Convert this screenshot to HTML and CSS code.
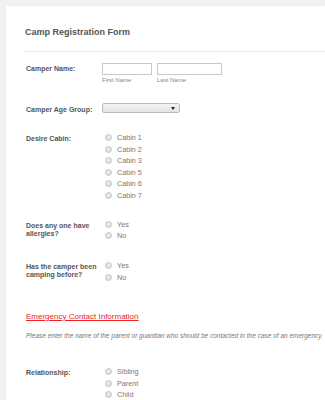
FILE: index.html
```html
<!DOCTYPE html>
<html>
<head>
<meta charset="utf-8">
<link rel="stylesheet" href="styles.css">
</head>
<body>
<div class="card">
  <h1 class="title">Camp Registration Form</h1>
  <div class="divider"></div>

  <div class="row row-name">
    <div class="label">Camper Name:</div>
    <div class="field">
      <div class="name-group">
        <div class="name-part">
          <span class="input first"></span>
          <span class="sub">First Name</span>
        </div>
        <div class="name-part">
          <span class="input last"></span>
          <span class="sub">Last Name</span>
        </div>
      </div>
    </div>
  </div>

  <div class="row row-age">
    <div class="label">Camper Age Group:</div>
    <div class="field">
      <span class="select"><span class="arrow"></span></span>
    </div>
  </div>

  <div class="row row-cabin">
    <div class="label">Desire Cabin:</div>
    <div class="field options">
      <div class="opt"><span class="radio"></span>Cabin 1</div>
      <div class="opt"><span class="radio"></span>Cabin 2</div>
      <div class="opt"><span class="radio"></span>Cabin 3</div>
      <div class="opt"><span class="radio"></span>Cabin 5</div>
      <div class="opt"><span class="radio"></span>Cabin 6</div>
      <div class="opt"><span class="radio"></span>Cabin 7</div>
    </div>
  </div>

  <div class="row row-allergy">
    <div class="label">Does any one have allergies?</div>
    <div class="field options">
      <div class="opt"><span class="radio"></span>Yes</div>
      <div class="opt"><span class="radio"></span>No</div>
    </div>
  </div>

  <div class="row row-camping">
    <div class="label">Has the camper been camping before?</div>
    <div class="field options">
      <div class="opt"><span class="radio"></span>Yes</div>
      <div class="opt"><span class="radio"></span>No</div>
    </div>
  </div>

  <h2 class="section">Emergency Contact Information</h2>
  <p class="note">Please enter the name of the parent or guardian who should be contacted in the case of an emergency.</p>

  <div class="row row-rel">
    <div class="label">Relationship:</div>
    <div class="field options">
      <div class="opt"><span class="radio"></span>Sibling</div>
      <div class="opt"><span class="radio"></span>Parent</div>
      <div class="opt"><span class="radio"></span>Child</div>
    </div>
  </div>
</div>
</body>
</html>
```

FILE: styles.css
```css
html, body {
  margin: 0;
  padding: 0;
}
body {
  background: #f2f2f2;
  font-family: "Liberation Sans", Arial, sans-serif;
  overflow: hidden;
  height: 400px;
}
.card {
  margin: 6px 0 0 6px;
  background: #fff;
  padding: 20px 0 40px 20px;
  box-shadow: 0 0 2px rgba(0,0,0,0.06);
  min-height: 500px;
}
.title {
  margin: 0 0 0 -1px;
  font-size: 9px;
  line-height: 12px;
  font-weight: bold;
  color: #555;
}
.divider {
  margin: 13px 0 0 -2px;
  border-top: 1px solid #ececec;
}
.row {
  display: flex;
  align-items: flex-start;
}
.label {
  width: 76px;
  flex: none;
  font-size: 7px;
  line-height: 8px;
  font-weight: bold;
  color: #555;
  padding-top: 3px;
}
.field {
  flex: none;
}
.row-name { margin-top: 11px; }
.row-name .label { padding-top: 2px; }
.name-group {
  display: flex;
  gap: 5px;
}
.name-part {
  display: flex;
  flex-direction: column;
}
.input {
  display: block;
  height: 10px;
  border: 1px solid #c9c9c9;
  background: #fff;
}
.input.first { width: 48px; }
.input.last { width: 63px; }
.sub {
  margin-top: 1px;
  font-size: 6px;
  line-height: 8px;
  color: #888;
}
.row-age { margin-top: 19px; }
.row-age .label { padding-top: 3px; }
.select {
  display: block;
  position: relative;
  width: 76px;
  height: 8px;
  border: 1px solid #bdbdbd;
  border-radius: 2px;
  background: linear-gradient(#f4f4f4, #e2e2e2);
}
.arrow {
  position: absolute;
  right: 4px;
  top: 3px;
  width: 0;
  height: 0;
  border-left: 2px solid transparent;
  border-right: 2px solid transparent;
  border-top: 3px solid #222;
}
.options {
  padding-left: 3px;
}
.opt {
  display: flex;
  align-items: center;
  height: 11.5px;
  font-size: 7.2px;
  color: #777;
}
.radio {
  display: inline-block;
  width: 5px;
  height: 5px;
  border-radius: 50%;
  border: 1px solid #c4c4c4;
  background: radial-gradient(circle at 50% 40%, #f0f0f0, #d6d6d6);
  margin-right: 5px;
  flex: none;
}
.row-cabin { margin-top: 18px; }
.row-allergy { margin-top: 17.6px; }
.row-camping { margin-top: 18.4px; }
.section {
  margin: 29px 0 0 0;
  font-size: 8px;
  line-height: 10px;
  font-weight: normal;
  color: #ee2222;
  text-decoration: underline;
}
.note {
  margin: 10px 0 0 0;
  font-size: 6.5px;
  line-height: 8px;
  font-style: italic;
  color: #777;
  white-space: nowrap;
}
.row-rel { margin-top: 26px; }
```
